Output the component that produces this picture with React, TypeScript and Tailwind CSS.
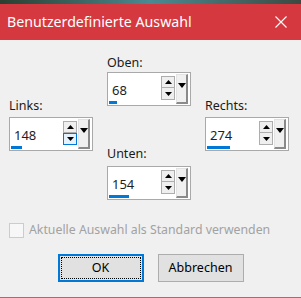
import React from 'react';

interface SpinBoxProps {
    value: string;
    bar: number;
    hoverDown?: boolean;
}

function SpinBox({ value, bar, hoverDown = false }: SpinBoxProps) {
    return (
        <div className="relative flex h-[34px] w-[84px] border border-[#a9a9a9] bg-white">
            <div className="flex flex-1 items-center pl-[4px] pt-[3px] text-[13px] text-[#1e1e1e]">{value}</div>
            <div className="flex w-[14px] flex-col pt-[3px]">
                <div className="flex h-[12px] items-center justify-center border border-[#adadad] bg-[#efefef]">
                    <svg width="7" height="4" viewBox="0 0 7 4">
                        <path d="M0 4 L3.5 0 L7 4 Z" fill="#000" />
                    </svg>
                </div>
                <div
                    className={
                        hoverDown
                            ? 'flex h-[12px] items-center justify-center border border-[#0078d7] bg-[#e5f1fb]'
                            : 'flex h-[12px] items-center justify-center border border-t-0 border-[#adadad] bg-[#efefef]'
                    }
                >
                    <svg width="7" height="4" viewBox="0 0 7 4">
                        <path d="M0 0 L7 0 L3.5 4 Z" fill="#000" />
                    </svg>
                </div>
            </div>
            <div className="my-[1px] ml-[1px] mr-[2px] flex w-[12px] justify-center border-b-2 border-l border-r-2 border-t border-b-[#8a8a8a] border-l-[#e3e3e3] border-r-[#8a8a8a] border-t-[#e3e3e3] bg-[#f0f0f0] pt-[8px]">
                <svg width="8" height="5" viewBox="0 0 8 5">
                    <path d="M0 0 L8 0 L4 5 Z" fill="#000" />
                </svg>
            </div>
            {/* progress bar under the value */}
            <div className="absolute bottom-[1px] left-[1px] h-[3px] bg-[#0078d7]" style={{ width: bar }} />
        </div>
    );
}

function Field({ label, children }: { label: string; children: React.ReactNode }) {
    return (
        <div className="flex flex-col">
            <div className="h-[16px] text-[12.5px] leading-[16px] text-[#1a1a1a]">{label}</div>
            {children}
        </div>
    );
}

export default function App() {
    return (
        <div
            className="flex h-[298px] w-[301px] flex-col overflow-hidden bg-[#f0f0f0]"
            style={{ fontFamily: '"Noto Sans", "Open Sans", sans-serif' }}
        >
            <div className="h-[4px] bg-gradient-to-r from-[#2c3f30] via-[#4a8a93] to-[#3b4a42]" />
            <div className="flex h-[36px] items-center justify-between bg-[#d6383f] pl-[7px] pr-[14px] text-white">
                <span className="text-[14.2px]">Benutzerdefinierte Auswahl</span>
                <svg width="12" height="12" viewBox="0 0 12 12">
                    <path d="M0.5 0.5 L11.5 11.5 M11.5 0.5 L0.5 11.5" stroke="#fff" strokeWidth="1.1" />
                </svg>
            </div>

            <div className="flex flex-1 flex-col px-[9px]">
                <div className="flex gap-[14px] pt-[15px]">
                    <div className="mt-[43px]">
                        <Field label="Links:">
                            <div className="mt-[3px]">
                                <SpinBox value="148" bar={11} hoverDown />
                            </div>
                        </Field>
                    </div>
                    <div className="flex flex-col">
                        <Field label="Oben:">
                            <div className="mt-[1px]">
                                <SpinBox value="68" bar={8} />
                            </div>
                        </Field>
                        <div className="mt-[40px]">
                            <Field label="Unten:">
                                <div className="mt-[4px]">
                                    <SpinBox value="154" bar={20} />
                                </div>
                            </Field>
                        </div>
                    </div>
                    <div className="mt-[43px]">
                        <Field label="Rechts:">
                            <div className="mt-[3px]">
                                <SpinBox value="274" bar={23} />
                            </div>
                        </Field>
                    </div>
                </div>

                <div className="mt-[22px] flex h-[16px] items-center gap-[5px]">
                    <div className="h-[15px] w-[15px] border border-[#cccccc] bg-[#f7f7f7]" />
                    <span className="text-[12.3px] text-[#a2a2a2]">Aktuelle Auswahl als Standard verwenden</span>
                </div>

                <div className="mt-[16px] flex justify-center gap-[14px]">
                    <button className="h-[28px] w-[86px] border-2 border-[#0078d7] bg-[#e1e1e1] p-[1px] text-[12.5px] text-black">
                        <div className="flex h-full w-full items-center justify-center border border-dotted border-black">OK</div>
                    </button>
                    <button className="flex h-[28px] w-[86px] items-center justify-center border border-[#adadad] bg-[#e1e1e1] text-[12.5px] text-black">
                        Abbrechen
                    </button>
                </div>
            </div>
            <div className="h-px bg-[#d05a5e]" />
        </div>
    );
}
